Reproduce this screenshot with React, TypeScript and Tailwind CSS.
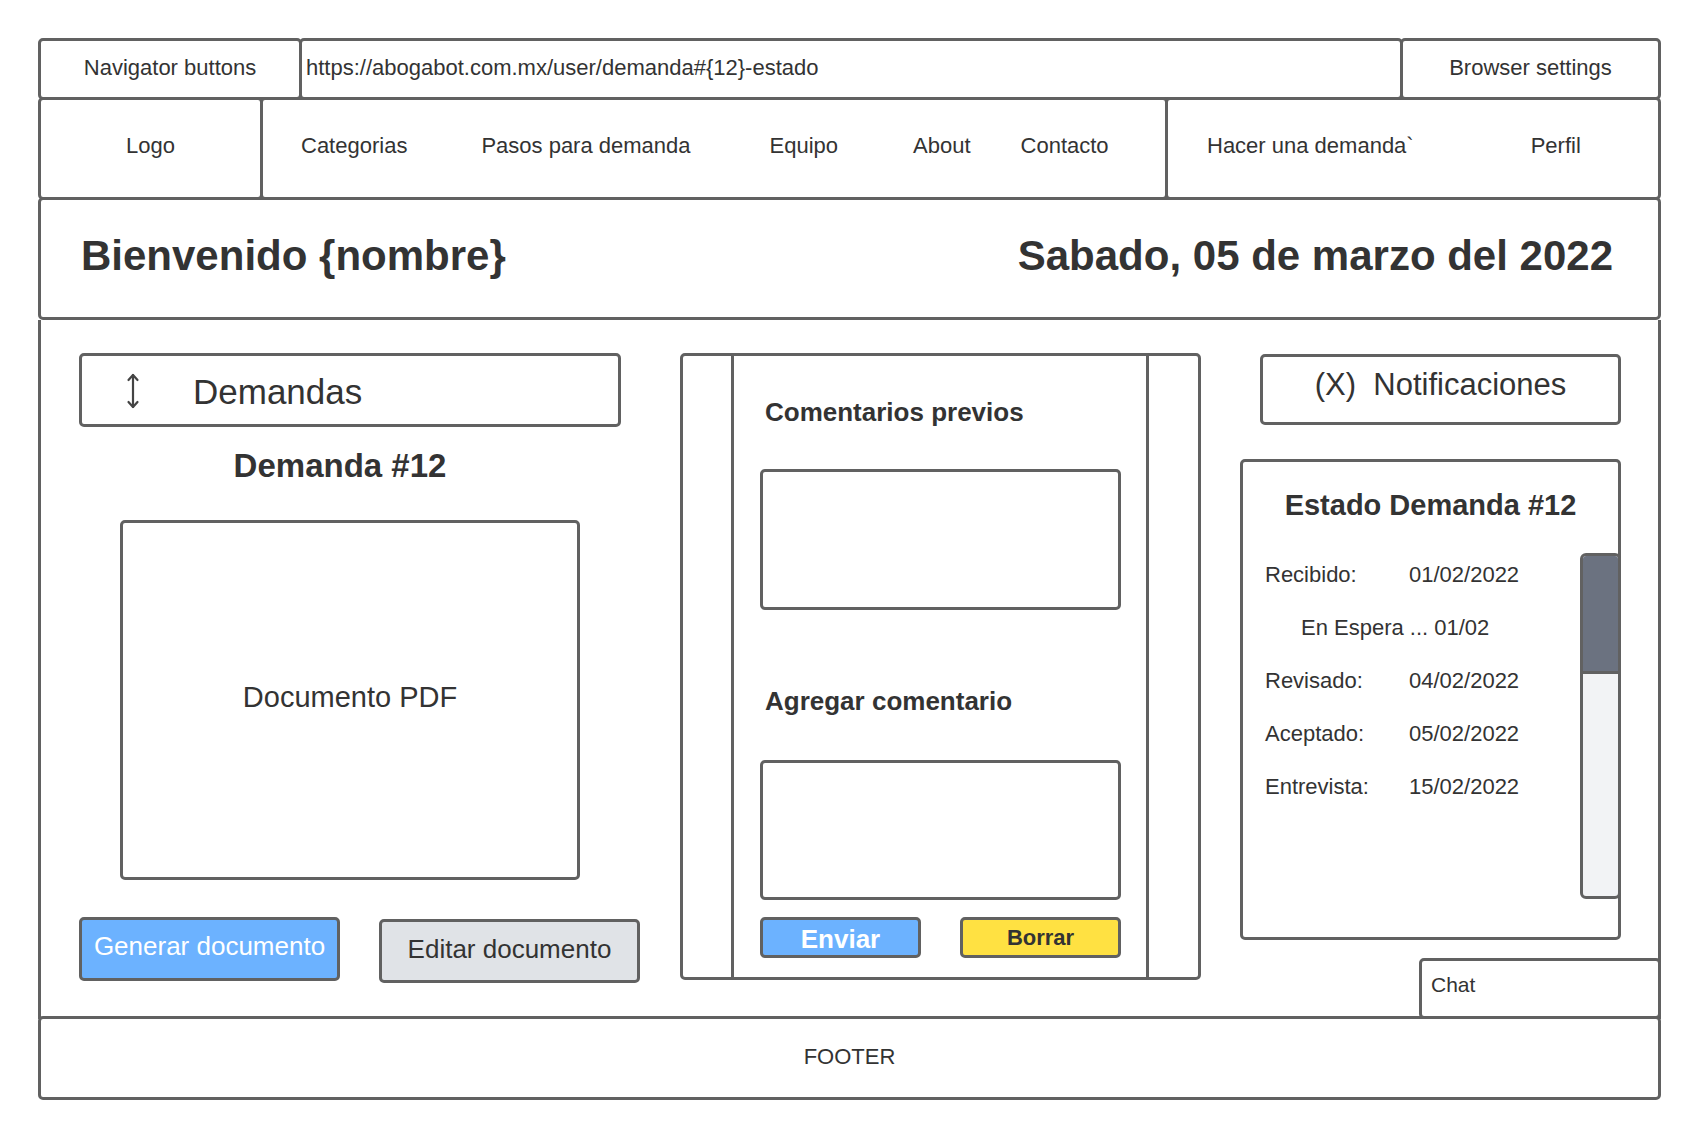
import React from "react";

const B = "border-[3px] border-[#616161] rounded-[5px]";

function UpDownArrow() {
  return (
    <svg width="14" height="36" viewBox="0 0 14 36" fill="none" stroke="#444" strokeWidth="2.2" strokeLinecap="round" strokeLinejoin="round">
      <path d="M7 2 V34" />
      <path d="M2.5 7 L7 2 L11.5 7" />
      <path d="M2.5 29 L7 34 L11.5 29" />
    </svg>
  );
}

export default function App() {
  const rows: [string, string, boolean?][] = [
    ["Recibido:", "01/02/2022"],
    ["En Espera ... 01/02", "", true],
    ["Revisado:", "04/02/2022"],
    ["Aceptado:", "05/02/2022"],
    ["Entrevista:", "15/02/2022"],
  ];
  return (
    <div
      className="w-[1700px] h-[1140px] bg-white text-[#333]"
      style={{ fontFamily: '"Liberation Sans", Arial, sans-serif' }}
    >
      <div className="ml-[38px] pt-[38px] w-[1623px] flex flex-col">
        {/* Browser bar */}
        <div className="flex h-[62px]">
          <div className={`${B} w-[264px] flex items-center justify-center pb-[4px] text-[22px]`}>Navigator buttons</div>
          <div className={`${B} -ml-[3px] w-[1104px] flex items-center pl-[4px] pb-[4px] text-[22px]`}>
            https://abogabot.com.mx/user/demanda#{"{12}"}-estado
          </div>
          <div className={`${B} -ml-[3px] flex-1 flex items-center justify-center pb-[4px] text-[22px]`}>Browser settings</div>
        </div>

        {/* Nav row */}
        <div className="flex h-[103px] -mt-[3px] text-[22px]">
          <div className={`${B} w-[225px] flex items-center justify-center pb-[7px]`}>Logo</div>
          <div className={`${B} -ml-[3px] w-[908px] flex items-center pb-[7px] whitespace-nowrap`}>
            <span className="ml-[38px]">Categorias</span>
            <span className="ml-[74px]">Pasos para demanda</span>
            <span className="ml-[79px]">Equipo</span>
            <span className="ml-[75px]">About</span>
            <span className="ml-[50px]">Contacto</span>
          </div>
          <div className={`${B} -ml-[3px] flex-1 flex items-center pb-[7px] whitespace-nowrap`}>
            <span className="ml-[39px]">Hacer una demanda`</span>
            <span className="ml-[117px]">Perfil</span>
          </div>
        </div>

        {/* Welcome */}
        <div className={`${B} -mt-[3px] h-[123px] flex items-center justify-between pl-[40px] pr-[45px] pb-[6px] text-[42px] font-bold whitespace-nowrap`}>
          <span>Bienvenido {"{nombre}"}</span>
          <span>Sabado, 05 de marzo del 2022</span>
        </div>

        {/* Body */}
        <div className="h-[699px] border-x-[3px] border-[#616161] flex pt-[33px]">
          {/* Left column */}
          <div className="ml-[38px] w-[561px] flex flex-col">
            <div className={`${B} w-[542px] h-[74px] flex items-center`}>
              <div className="ml-[44px] mt-[2px]">
                <UpDownArrow />
              </div>
              <span className="ml-[53px] mt-[3px] text-[35px] leading-none">Demandas</span>
            </div>
            <div className="mt-[20px] w-[522px] text-center text-[33px] font-bold leading-[38px]">Demanda #12</div>
            <div className={`${B} ml-[41px] mt-[35px] w-[460px] h-[360px] flex items-center justify-center pb-[4px] text-[29px]`}>
              Documento PDF
            </div>
            <div className="mt-[37px] flex items-start gap-[39px]">
              <div className={`${B} w-[262px] h-[64px] bg-[#6cb2ff] text-white text-[26px] flex items-center justify-center pb-[6px]`}>
                Generar documento
              </div>
              <div className={`${B} mt-[2px] w-[262px] h-[64px] bg-[#e0e3e7] text-[26px] flex items-center justify-center pb-[4px]`}>
                Editar documento
              </div>
            </div>
          </div>

          {/* Middle column */}
          <div className={`${B} ml-[40px] w-[521px] h-[627px] flex`}>
            <div className="w-[48px]" />
            <div className="w-[418px] border-x-[3px] border-[#616161] flex flex-col pl-[26px]">
              <div className="mt-[40px] ml-[5px] text-[26px] font-bold leading-[32px]">Comentarios previos</div>
              <div className={`${B} mt-[41px] w-[361px] h-[141px]`} />
              <div className="mt-[75px] ml-[5px] text-[26px] font-bold leading-[32px]">Agregar comentario</div>
              <div className={`${B} mt-[43px] w-[361px] h-[140px]`} />
              <div className="mt-[17px] flex gap-[39px]">
                <div className={`${B} w-[161px] h-[41px] bg-[#6cb2ff] text-white text-[26px] font-bold flex items-center justify-center pt-[3px]`}>
                  Enviar
                </div>
                <div className={`${B} w-[161px] h-[41px] bg-[#ffe142] text-[22px] font-bold flex items-center justify-center`}>
                  Borrar
                </div>
              </div>
            </div>
            <div className="flex-1" />
          </div>

          {/* Right column */}
          <div className="ml-[39px] flex-1 flex flex-col">
            <div className={`${B} ml-[20px] mt-[1px] w-[361px] h-[71px] flex items-center justify-center pb-[8px] text-[31px] whitespace-pre`}>
              {"(X)  Notificaciones"}
            </div>
            <div className={`${B} mt-[34px] w-[381px] h-[481px] flex flex-col`}>
              <div className="pt-[26px] text-center text-[29px] font-bold leading-[34px]">Estado Demanda #12</div>
              <div className="mt-[31px] flex items-start">
                <div className="flex-1 pl-[22px] pt-[9px] flex flex-col gap-[27px] text-[22px] leading-[26px]">
                  {rows.map(([a, b, indent], i) => (
                    <div key={i} className="flex whitespace-nowrap">
                      {indent ? (
                        <span className="ml-[36px]">{a}</span>
                      ) : (
                        <>
                          <span className="w-[144px]">{a}</span>
                          <span>{b}</span>
                        </>
                      )}
                    </div>
                  ))}
                </div>
                <div className="w-[41px] h-[346px] -mr-[3px] border-[3px] border-[#616161] rounded-[6px] bg-[#f2f3f5] overflow-hidden flex flex-col">
                  <div className="h-[118px] bg-[#6b7280] border-b-[3px] border-[#616161]" />
                </div>
              </div>
            </div>
            <div className={`${B} mt-auto self-end -mr-[3px] w-[242px] h-[61px] flex items-center pl-[9px] pb-[8px] text-[21px]`}>
              Chat
            </div>
          </div>
        </div>

        {/* Footer */}
        <div className={`${B} -mt-[3px] h-[84px] flex items-center justify-center pb-[4px] text-[22px]`}>FOOTER</div>
      </div>
    </div>
  );
}
